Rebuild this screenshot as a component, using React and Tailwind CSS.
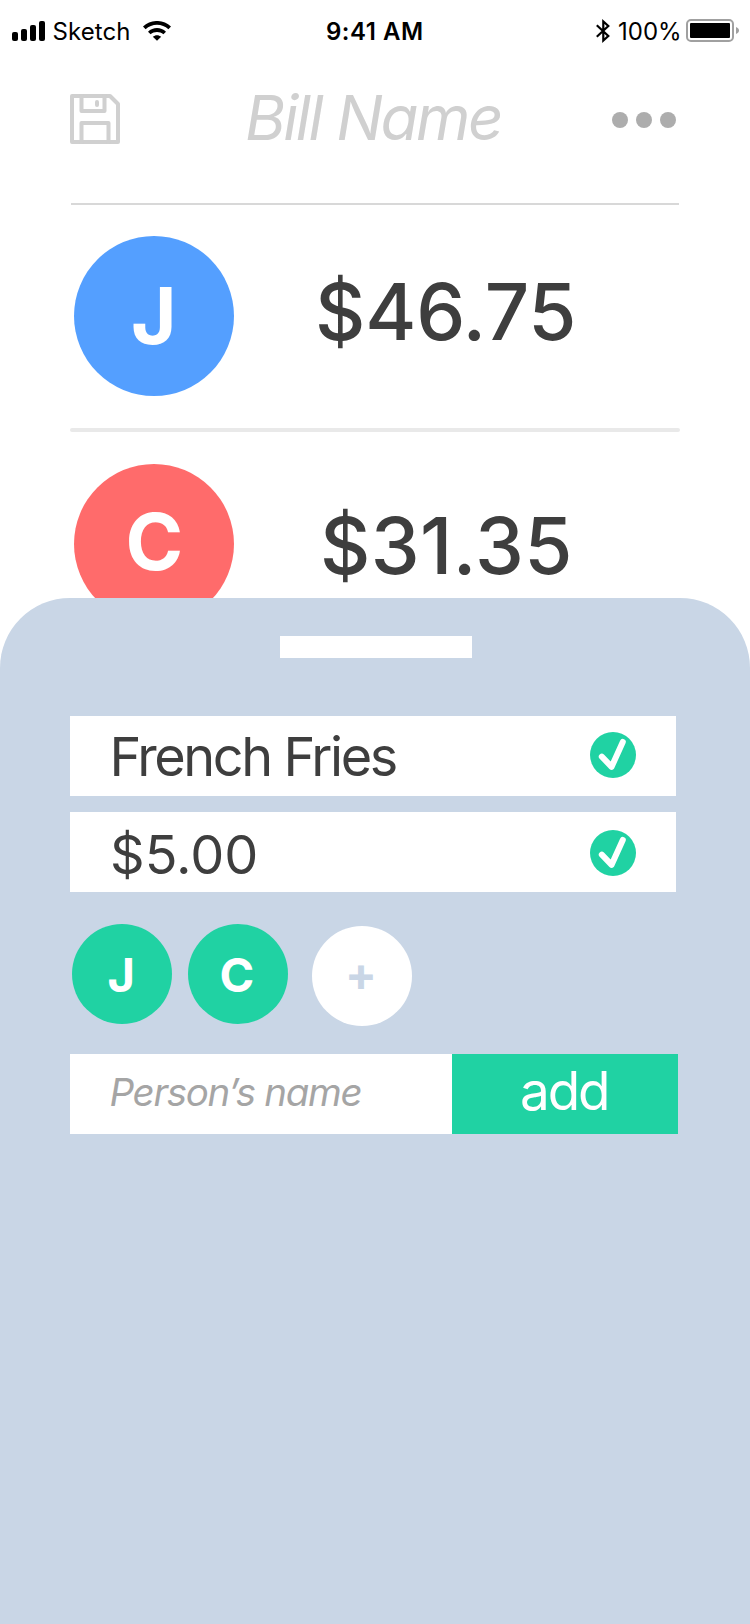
import React from "react";

function SignalIcon() {
  return (
    <svg className="h-5 w-[33px]" viewBox="0 0 33 20">
      <rect x="0" y="11" width="6" height="9" rx="2" />
      <rect x="9" y="8" width="6" height="12" rx="2" />
      <rect x="18" y="4" width="6" height="16" rx="2" />
      <rect x="27" y="0" width="6" height="20" rx="2" />
    </svg>
  );
}

function WifiIcon() {
  return (
    <svg className="h-5 w-7" viewBox="0 0 28 20">
      <path d="M0 5.600C7.600-1.900 20.400-1.900 28 5.600L25.400 8.300C19.200 2.300 8.800 2.300 2.600 8.300Z" />
      <path d="M5 10.700C10 5.900 18 5.900 23 10.700L20.400 13.300C16.900 10.100 11.100 10.100 7.600 13.300Z" />
      <path d="M9.800 15.700C12.200 13.600 15.800 13.600 18.200 15.700L14 19.700Z" />
    </svg>
  );
}

function BluetoothIcon() {
  return (
    <svg className="h-6 w-[14px]" viewBox="0 0 14 24" fill="none" stroke="black" strokeWidth="2.200">
      <path d="M0.800 6.300L12.300 17L7.300 21.500V2.500L12.300 7L0.800 17.700" />
    </svg>
  );
}

function BatteryIcon() {
  return (
    <svg className="h-[23px] w-[53px]" viewBox="0 0 53 23">
      <rect x="1" y="1" width="46" height="21" rx="4" fill="none" stroke="#a0a0a0" strokeWidth="2" />
      <rect x="4" y="4" width="40" height="15" rx="1" />
      <path d="M50 8C52 8.800 53 10 53 11.500S52 14.200 50 15Z" fill="#a0a0a0" />
    </svg>
  );
}

function SaveIcon() {
  return (
    <svg
      className="h-[50px] w-[50px]"
      viewBox="0 0 50 50"
      fill="none"
      stroke="#d0d0d0"
      strokeWidth="4"
      strokeLinecap="round"
      strokeLinejoin="round"
    >
      <path d="M2 2H40L48 10V48H2Z" />
      <path d="M11.500 2V17H34.500V2" />
      <path d="M27 8V11" />
      <path d="M11.500 48V29H38.500V48" />
    </svg>
  );
}

function CheckIcon() {
  return (
    <svg className="h-[46px] w-[46px]" viewBox="0 0 46 46">
      <circle cx="23" cy="23" r="23" fill="#20d2a3" />
      <path
        d="M11.800 24.700L21.600 34.800L32.800 9.900"
        fill="none"
        stroke="white"
        strokeWidth="6"
        strokeLinecap="round"
        strokeLinejoin="round"
      />
    </svg>
  );
}

export default function App() {
  return (
    <div className="flex h-[1624px] w-[750px] flex-col overflow-hidden bg-white font-[Inter,sans-serif] whitespace-nowrap text-[#3e3e3e]">
      <div className="flex h-[61px] shrink-0 items-center pl-3 text-2xl text-black">
        <SignalIcon />
        <span className="mt-0.5 ml-[7.500px] w-[90.500px] tracking-[0.1px]">Sketch</span>
        <WifiIcon />
        <span className="mt-0.5 ml-[155px] w-[270px] font-semibold tracking-[0.5px]">9:41 AM</span>
        <BluetoothIcon />
        <span className="mt-0.5 ml-2 w-[68px]">100%</span>
        <BatteryIcon />
      </div>

      <header className="flex h-[142px] shrink-0 items-start pl-[70px]">
        <div className="mt-[33px]">
          <SaveIcon />
        </div>
        <h1 className="mt-[17px] ml-[125px] w-[367px] text-[62px] leading-[80px] font-normal tracking-[-2.39px] text-[#d0d0d0] italic">
          Bill Name
        </h1>
        <div className="mt-[51px] flex gap-2">
          <i className="size-4 rounded-full bg-[#adadad]" />
          <i className="size-4 rounded-full bg-[#adadad]" />
          <i className="size-4 rounded-full bg-[#adadad]" />
        </div>
      </header>

      <main className="h-[395px] shrink-0">
        <div className="ml-[71px] h-0.5 w-[608px] bg-[#d8d8d8]" />
        <section className="flex h-[223px] items-start pt-[31px] pl-[74px] text-[78px]">
          <div className="size-40 rounded-full bg-[#549fff] pl-[57px] leading-[160px] font-bold text-white">J</div>
          <div className="ml-[81px] leading-[152px] font-medium tracking-[-0.2px]">$46.75</div>
        </section>
        <div className="ml-[70px] h-1 w-[610px] rounded-full bg-[#e9e9e9]" />
        <section className="flex items-start pt-8 pl-[74px] text-[78px]">
          <div className="size-40 rounded-full bg-[#ff6b6b] pl-[51.500px] leading-[156px] font-bold text-white">C</div>
          <div className="ml-[86px] leading-[164px] font-medium tracking-[0.4px]">$31.35</div>
        </section>
      </main>

      <div className="relative flex grow flex-col items-start rounded-t-[70px] bg-[#c9d6e6] pl-[70px]">
        <div className="mt-[38px] ml-[210px] h-[22px] w-48 bg-white" />
        <div className="mt-[58px] flex h-20 w-[606px] items-start justify-between bg-white pr-10 pl-[39.500px] text-[54px] leading-[82px] tracking-[-2.45px]">
          <span>French Fries</span>
          <div className="mt-4">
            <CheckIcon />
          </div>
        </div>
        <div className="mt-4 flex h-20 w-[606px] items-start justify-between bg-white pr-10 pl-10 text-[54px] leading-[86px]">
          <span>$5.00</span>
          <div className="mt-[18px]">
            <CheckIcon />
          </div>
        </div>

        <div className="mt-8 ml-0.5 flex items-start text-[47px] leading-[102px] font-bold text-white">
          <div className="size-[100px] rounded-full bg-[#20d2a3] pl-[35.500px]">J</div>
          <div className="ml-4 size-[100px] rounded-full bg-[#20d2a3] pl-[31.500px]">C</div>
          <div className="mt-0.5 ml-6 size-[100px] rounded-full bg-white pl-[33px] leading-[96px] text-[#c9d6e6]">+</div>
        </div>

        <div className="mt-7 flex h-20">
          <div className="w-[382px] bg-white pl-[39.500px] text-[38.500px] leading-[76px] tracking-[-1.28px] text-[#a5a5a5] italic">
            Person’s name
          </div>
          <div className="w-[226px] bg-[#20d2a3] pl-[68px] text-[53px] leading-[74px] tracking-[-2.1px] text-white">add</div>
        </div>
      </div>
    </div>
  );
}
